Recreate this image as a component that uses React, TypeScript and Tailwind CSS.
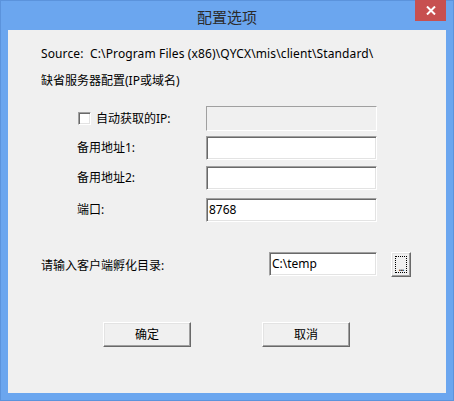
import React from "react";

const sunken =
  "border border-t-[#a0a0a0] border-l-[#a0a0a0] border-r-white border-b-white shadow-[inset_1px_1px_0_#696969,inset_-1px_-1px_0_#e3e3e3] bg-white";
const raised =
  "border border-t-white border-l-white border-r-[#696969] border-b-[#696969] shadow-[inset_-1px_-1px_0_#a0a0a0,inset_1px_1px_0_#e3e3e3] bg-[#f0f0f0]";

export default function App() {
  return (
    <div
      className="w-[454px] h-[401px] bg-[#6ba6ef] border border-[#5b93dc] flex flex-col text-[12px] text-black"
      style={{ fontFamily: '"Noto Sans", "Noto Sans CJK SC", sans-serif' }}
    >
      <div className="relative h-[29px] flex items-center justify-center">
        <span
          className="text-[15px] text-[#2b2b2b] leading-none mt-[1px]"
          style={{ fontFamily: '"Noto Sans CJK SC", sans-serif' }}
        >
          配置选项
        </span>
        <div className="absolute right-[7px] top-[-1px] w-[31px] h-[21px] bg-[#c75050] flex items-center justify-center">
          <svg width="10" height="9" viewBox="0 0 10 9">
            <path d="M1 0.5 L9 8.5 M9 0.5 L1 8.5" stroke="white" strokeWidth="2" />
          </svg>
        </div>
      </div>
      <div className="mx-[7px] mb-[7px] flex-1 bg-[#f0f0f0] pl-[33px] pt-[16px] flex flex-col">
        <div className="h-[16px] leading-[16px] whitespace-pre tracking-[0.12px]">
          {"Source:  C:\\Program Files (x86)\\QYCX\\mis\\client\\Standard\\"}
        </div>
        <div className="h-[16px] leading-[16px] mt-[11px]">缺省服务器配置(IP或域名)</div>

        <div className="mt-[17px] flex flex-col">
          <div className="grid grid-cols-[165px_171px] h-[25px] items-center">
            <div className="flex items-center pl-[37px]">
              <span className={`w-[13px] h-[13px] ${sunken}`} />
              <span className="ml-[5px] leading-[16px]">自动获取的IP:</span>
            </div>
            <div className="h-[25px] border border-t-[#a0a0a0] border-l-[#a0a0a0] border-r-white border-b-white bg-[#f0f0f0]" />
          </div>
          <div className="grid grid-cols-[165px_171px] h-[24px] items-center mt-[5px]">
            <div className="pl-[36px] leading-[16px]">备用地址1:</div>
            <div className={`h-[24px] ${sunken}`} />
          </div>
          <div className="grid grid-cols-[165px_171px] h-[24px] items-center mt-[6px]">
            <div className="pl-[36px] leading-[16px]">备用地址2:</div>
            <div className={`h-[24px] ${sunken}`} />
          </div>
          <div className="grid grid-cols-[165px_171px] h-[24px] items-center mt-[8px]">
            <div className="pl-[36px] leading-[16px]">端口:</div>
            <div className={`h-[24px] ${sunken} flex items-center pl-[2px] leading-[16px]`}>8768</div>
          </div>
        </div>

        <div className="mt-[30px] flex items-center h-[25px]">
          <div className="w-[228px] leading-[16px] mt-[3px]">请输入客户端孵化目录:</div>
          <div className={`w-[108px] h-[24px] self-start ${sunken} flex items-center pl-[2px] leading-[16px]`}>
            C:\temp
          </div>
          <div className={`ml-[14px] w-[20px] h-[25px] ${raised} p-[3px] flex`}>
            <div className="flex-1 border border-dotted border-black flex items-end justify-center text-[10px] leading-[8px] pb-[1px] tracking-[-1px]">
              ...
            </div>
          </div>
        </div>

        <div className="mt-[45px] flex">
          <div className={`ml-[62px] w-[88px] h-[25px] ${raised} flex items-center justify-center leading-[16px]`}>
            确定
          </div>
          <div className={`ml-[71px] w-[88px] h-[25px] ${raised} flex items-center justify-center leading-[16px]`}>
            取消
          </div>
        </div>
      </div>
    </div>
  );
}
